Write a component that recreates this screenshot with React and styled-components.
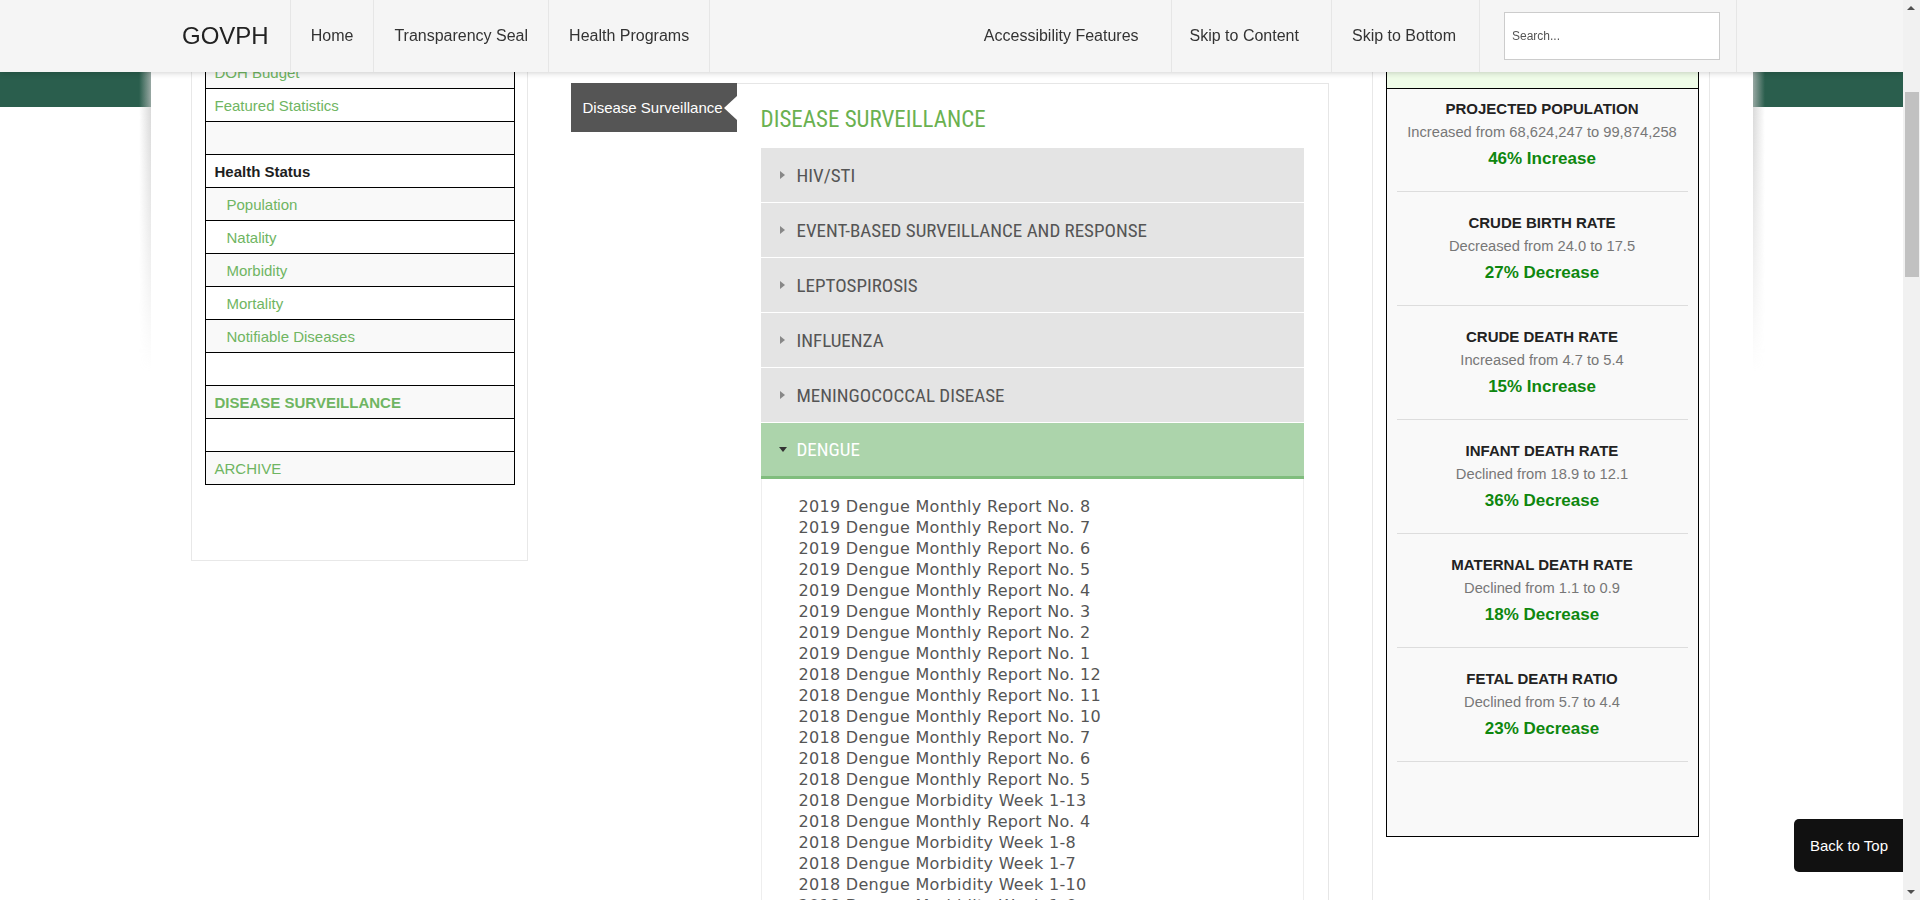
import React from "react";
import styled, { createGlobalStyle } from "styled-components";

const GlobalStyle = createGlobalStyle`
  html, body {
    margin: 0;
    padding: 0;
    background: #fff;
    font-family: "Liberation Sans", Arial, sans-serif;
  }
  * {
    box-sizing: border-box;
  }
`;

const leftMenu = [
  { label: "DOH Budget", kind: "link" },
  { label: "Featured Statistics", kind: "link" },
  { label: "", kind: "blank" },
  { label: "Health Status", kind: "head" },
  { label: "Population", kind: "sub" },
  { label: "Natality", kind: "sub" },
  { label: "Morbidity", kind: "sub" },
  { label: "Mortality", kind: "sub" },
  { label: "Notifiable Diseases", kind: "sub" },
  { label: "", kind: "blank" },
  { label: "DISEASE SURVEILLANCE", kind: "active" },
  { label: "", kind: "blank" },
  { label: "ARCHIVE", kind: "link" },
];

const sections = [
  "HIV/STI",
  "EVENT-BASED SURVEILLANCE AND RESPONSE",
  "LEPTOSPIROSIS",
  "INFLUENZA",
  "MENINGOCOCCAL DISEASE",
];

const reports = [
  "2019 Dengue Monthly Report No. 8",
  "2019 Dengue Monthly Report No. 7",
  "2019 Dengue Monthly Report No. 6",
  "2019 Dengue Monthly Report No. 5",
  "2019 Dengue Monthly Report No. 4",
  "2019 Dengue Monthly Report No. 3",
  "2019 Dengue Monthly Report No. 2",
  "2019 Dengue Monthly Report No. 1",
  "2018 Dengue Monthly Report No. 12",
  "2018 Dengue Monthly Report No. 11",
  "2018 Dengue Monthly Report No. 10",
  "2018 Dengue Monthly Report No. 7",
  "2018 Dengue Monthly Report No. 6",
  "2018 Dengue Monthly Report No. 5",
  "2018 Dengue Morbidity Week 1-13",
  "2018 Dengue Monthly Report No. 4",
  "2018 Dengue Morbidity Week 1-8",
  "2018 Dengue Morbidity Week 1-7",
  "2018 Dengue Morbidity Week 1-10",
  "2018 Dengue Morbidity Week 1-6",
  "2018 Dengue Morbidity Week 1-5",
  "2018 Dengue Morbidity Week 1-4",
  "2018 Dengue Morbidity Week 1-3",
];

const stats = [
  { title: "PROJECTED POPULATION", text: "Increased from 68,624,247 to 99,874,258", result: "46% Increase" },
  { title: "CRUDE BIRTH RATE", text: "Decreased from 24.0 to 17.5", result: "27% Decrease" },
  { title: "CRUDE DEATH RATE", text: "Increased from 4.7 to 5.4", result: "15% Increase" },
  { title: "INFANT DEATH RATE", text: "Declined from 18.9 to 12.1", result: "36% Decrease" },
  { title: "MATERNAL DEATH RATE", text: "Declined from 1.1 to 0.9", result: "18% Decrease" },
  { title: "FETAL DEATH RATIO", text: "Declined from 5.7 to 4.4", result: "23% Decrease" },
];

const App = () => {
  return (
    <>
      <GlobalStyle />
      <TopBar>
        <TopBarInner>
          <Brand>GOVPH</Brand>
          <NavItem>Home</NavItem>
          <NavItem>Transparency Seal</NavItem>
          <NavItem>Health Programs</NavItem>
          <RightNav>
            <NavItem padRight={32}>Accessibility Features</NavItem>
            <NavItem padLeft={18} padRight={32}>Skip to Content</NavItem>
            <NavItem padRight={23}>Skip to Bottom</NavItem>
            <SearchCell>
              <SearchInput placeholder="Search..." />
            </SearchCell>
          </RightNav>
        </TopBarInner>
      </TopBar>

      <Page>
        <Sheet>
          <SideCol>
            <SidePanel>
              <MenuList>
                {leftMenu.map((row, index) => (
                  <MenuRow key={index} kind={row.kind}>
                    {row.label}
                  </MenuRow>
                ))}
              </MenuList>
            </SidePanel>
          </SideCol>

          <MainCol>
            <Tab>Disease Surveillance</Tab>
            <ContentBox>
              <Heading>DISEASE SURVEILLANCE</Heading>
              <Accordion>
                {sections.map((name) => (
                  <AccordionHead key={name}>
                    <Caret />
                    {name}
                  </AccordionHead>
                ))}
                <AccordionHead open>
                  <Caret open />
                  DENGUE
                </AccordionHead>
                <ReportPanel>
                  {reports.map((report, index) => (
                    <ReportLink key={index}>{report}</ReportLink>
                  ))}
                </ReportPanel>
              </Accordion>
            </ContentBox>
          </MainCol>

          <StatsCol>
            <StatsPanel>
              <StatsBox>
                <StatsHead />
                <StatsList>
                  {stats.map((item) => (
                    <StatItem key={item.title}>
                      <StatTitle>{item.title}</StatTitle>
                      <StatText>{item.text}</StatText>
                      <StatResult>{item.result}</StatResult>
                    </StatItem>
                  ))}
                </StatsList>
              </StatsBox>
            </StatsPanel>
          </StatsCol>
        </Sheet>
      </Page>

      <BackToTop>Back to Top</BackToTop>

      <ScrollTrack>
        <ScrollArrow dir="up" />
        <ScrollThumb />
        <ScrollArrow dir="down" />
      </ScrollTrack>
    </>
  );
};

const TopBar = styled.header`
  position: fixed;
  top: 0;
  left: 0;
  right: 17px;
  height: 72px;
  background: #f5f5f5;
  box-shadow: 0 1px 6px rgba(0, 0, 0, 0.18);
  z-index: 50;
`;

const TopBarInner = styled.nav`
  width: 1571px;
  height: 100%;
  margin: 0 auto;
  display: flex;
  align-items: stretch;
`;

const Brand = styled.div`
  display: flex;
  align-items: center;
  padding: 0 21px 0 16px;
  font-size: 24px;
  color: #222;
  border-right: 1px solid #e6e6e6;
`;

const NavItem = styled.a`
  display: flex;
  align-items: center;
  padding: 0 ${({ padRight }) => padRight || 20}px 0 ${({ padLeft }) => padLeft || 20}px;
  font-size: 16px;
  color: #333;
  border-right: 1px solid #e6e6e6;
  white-space: nowrap;
  cursor: pointer;
`;

const RightNav = styled.div`
  margin-left: auto;
  display: flex;
  align-items: stretch;
`;

const SearchCell = styled.div`
  display: flex;
  align-items: center;
  padding: 0 16px 0 24px;
  border-right: 1px solid #e6e6e6;
`;

const SearchInput = styled.input`
  width: 216px;
  height: 48px;
  border: 1px solid #ccc;
  background: #fff;
  padding: 0 7px;
  font-family: "Liberation Sans", Arial, sans-serif;
  font-size: 12px;
  color: #555;
  outline: none;

  &::placeholder {
    color: #555;
  }
`;

const Page = styled.main`
  margin-right: 17px;
  background: linear-gradient(to bottom, #2a5e4d 0, #2a5e4d 107px, #fff 107px);
`;

const Sheet = styled.div`
  position: relative;
  width: 1602px;
  margin: 0 auto;
  background: #fff;
  display: flex;
  align-items: flex-start;
  gap: 43px;
  padding: 0 42px 0 40px;

  &::before,
  &::after {
    content: "";
    position: absolute;
    top: 72px;
    width: 12px;
    height: 300px;
    -webkit-mask-image: linear-gradient(to bottom, #000 8%, transparent);
    mask-image: linear-gradient(to bottom, #000 8%, transparent);
  }

  &::before {
    left: -12px;
    background: linear-gradient(to left, rgba(200, 200, 200, 0.7), rgba(200, 200, 200, 0));
  }

  &::after {
    right: -12px;
    background: linear-gradient(to right, rgba(200, 200, 200, 0.7), rgba(200, 200, 200, 0));
  }
`;

const SideCol = styled.aside`
  width: 337px;
  flex: none;
  margin-top: 40px;
`;

const SidePanel = styled.div`
  border: 1px solid #e8e8e8;
  padding: 14px 12px 75px 13px;
`;

const MenuList = styled.div`
  border: 1px solid #000;
`;

const MenuRow = styled.div`
  height: 33px;
  display: flex;
  align-items: center;
  border-top: 1px solid #000;
  background: #fff;
  font-size: 15px;
  color: #6fb562;
  padding-left: ${({ kind }) => (kind === "sub" ? "21px" : "9px")};
  font-weight: ${({ kind }) => (kind === "head" || kind === "active" ? "bold" : "normal")};
  ${({ kind }) => kind === "head" && "color: #1e1e1e;"}

  &:first-child {
    border-top: none;
    height: 32px;
  }

  &:nth-child(odd) {
    background: #f9f9f9;
  }
`;

const MainCol = styled.section`
  width: 758px;
  flex: none;
  margin-top: 83px;
  display: flex;
  align-items: flex-start;
`;

const Tab = styled.div`
  position: relative;
  flex: none;
  width: 166px;
  height: 49px;
  background: #555;
  color: #fff;
  font-size: 15px;
  display: flex;
  align-items: center;
  padding-left: 12px;
  white-space: nowrap;

  &::after {
    content: "";
    position: absolute;
    right: 0;
    top: 13px;
    border-top: 12px solid transparent;
    border-bottom: 12px solid transparent;
    border-right: 13px solid #fff;
  }
`;

const ContentBox = styled.div`
  flex: 1;
  border-top: 1px solid #e6e6e6;
  border-right: 1px solid #e6e6e6;
  padding: 0 24px 0 24px;
`;

const Heading = styled.h2`
  margin: 21px 0 13px;
  font-family: "Roboto Condensed", "Liberation Sans Narrow", Roboto, sans-serif;
  font-weight: normal;
  font-size: 23px;
  line-height: 30px;
  color: #6ab150;
`;

const Accordion = styled.div`
  display: flex;
  flex-direction: column;
`;

const AccordionHead = styled.div`
  height: ${({ open }) => (open ? "56px" : "55px")};
  display: flex;
  align-items: center;
  gap: 12px;
  padding-left: 19px;
  background: ${({ open }) => (open ? "#acd4ab" : "#e4e4e4")};
  border-bottom: ${({ open }) => (open ? "3px solid #80bd7d" : "1px solid #fff")};
  font-family: "Roboto Condensed", "Liberation Sans Narrow", Roboto, sans-serif;
  font-size: 19px;
  color: ${({ open }) => (open ? "#fff" : "#555")};
`;

const Caret = styled.span`
  width: 0;
  height: 0;
  ${({ open }) =>
    open
      ? `border-left: 4px solid transparent;
         border-right: 4px solid transparent;
         border-top: 5px solid #333;
         margin-left: -1px;
         margin-right: -2px;`
      : `border-top: 4px solid transparent;
         border-bottom: 4px solid transparent;
         border-left: 5px solid #888;`}
`;

const ReportPanel = styled.div`
  border-left: 1px solid #eee;
  border-right: 1px solid #eee;
  padding: 17px 0 40px 37px;
`;

const ReportLink = styled.a`
  display: block;
  font-family: "DejaVu Sans", Verdana, sans-serif;
  font-size: 16px;
  line-height: 21px;
  letter-spacing: 0.3px;
  color: #555;
`;

const StatsCol = styled.aside`
  width: 338px;
  flex: none;
  margin-top: 40px;
`;

const StatsPanel = styled.div`
  border: 1px solid #e8e8e8;
  padding: 14px 10px 200px 13px;
`;

const StatsBox = styled.div`
  border: 1px solid #000;
  background: #f9f9f9;
  padding-bottom: 74px;
`;

const StatsHead = styled.div`
  height: 33px;
  background: #effce8;
  border-bottom: 1px solid #000;
`;

const StatsList = styled.div`
  margin: 0 10px;
`;

const StatItem = styled.div`
  padding: 21px 0 20px;
  border-bottom: 1px solid #ddd;
  text-align: center;

  &:first-child {
    padding-top: 10px;
  }
`;

const StatTitle = styled.div`
  font-size: 15px;
  line-height: 20px;
  font-weight: bold;
  color: #222;
`;

const StatText = styled.div`
  margin-top: 3px;
  font-size: 14.7px;
  line-height: 20px;
  color: #777;
`;

const StatResult = styled.div`
  margin-top: 5px;
  font-size: 17px;
  line-height: 24px;
  font-weight: bold;
  color: #0e870e;
`;

const BackToTop = styled.a`
  position: fixed;
  right: 17px;
  bottom: 28px;
  height: 53px;
  display: flex;
  align-items: center;
  padding: 0 15px 0 16px;
  background: #111;
  color: #fff;
  font-size: 15px;
  border-radius: 5px 0 0 5px;
  z-index: 60;
  cursor: pointer;
`;

const ScrollTrack = styled.div`
  position: fixed;
  top: 0;
  right: 0;
  bottom: 0;
  width: 17px;
  background: #f1f1f1;
  z-index: 70;
`;

const ScrollThumb = styled.div`
  position: absolute;
  top: 92px;
  left: 2px;
  right: 1px;
  height: 185px;
  background: #c1c1c1;
`;

const ScrollArrow = styled.span`
  position: absolute;
  left: 4px;
  width: 0;
  height: 0;
  border-left: 4px solid transparent;
  border-right: 4px solid transparent;
  ${({ dir }) =>
    dir === "up"
      ? "top: 6px; border-bottom: 4px solid #505050;"
      : "bottom: 6px; border-top: 4px solid #505050;"}
`;

export default App;
